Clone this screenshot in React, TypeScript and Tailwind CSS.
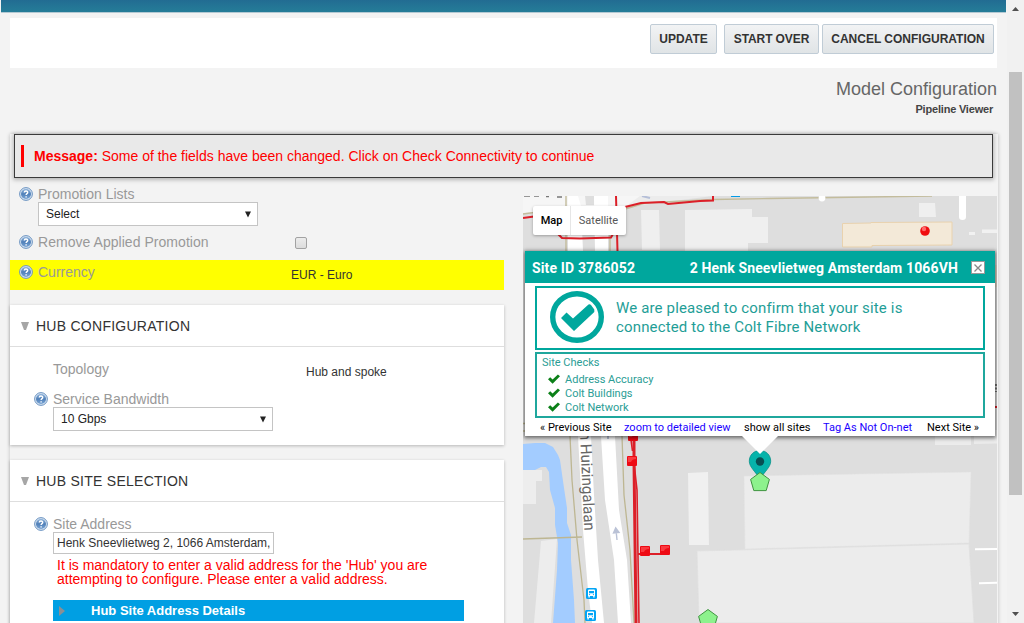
import type { ReactNode } from "react";

function HelpIcon() {
  return (
    <svg className="mb-px h-[14px] w-[14px] shrink-0" viewBox="0 0 14 14">
      <defs>
        <linearGradient id="help-fill" x1="0" y1="0" x2="0" y2="1">
          <stop offset="0" stopColor="#8fb4dc" />
          <stop offset="0.5" stopColor="#4f7fb8" />
          <stop offset="1" stopColor="#7ba6d6" />
        </linearGradient>
      </defs>
      <circle cx="7" cy="7" r="6.4" fill="#d5e2f0" stroke="#5f8abc" strokeWidth="0.9" />
      <circle cx="7" cy="7" r="5" fill="url(#help-fill)" />
      <path d="M5.3 5.6C5.3 3.6 8.7 3.5 8.7 5.4C8.7 6.6 7.1 6.6 7.1 8M7.1 9.2V10.5" fill="none" stroke="#fff" strokeWidth="1.4" />
    </svg>
  );
}

function Label({ children, help = true }: { children: ReactNode; help?: boolean }) {
  return (
    <div className="flex h-[15px] items-center gap-[5px] text-[14px] leading-[15px] text-[#999]">
      {help ? <HelpIcon /> : <span className="w-[14px]" />}
      <span className="whitespace-nowrap">{children}</span>
    </div>
  );
}

function Select({ value }: { value: string }) {
  return (
    <div className="flex h-[24px] w-[220px] items-center justify-between border border-[#c4c4c4] bg-white pl-[7px] pr-[5px] text-[12px] text-[#222]">
      <span>{value}</span>
      <svg className="h-[7px] w-[8px]" viewBox="0 0 8 7">
        <path d="M1 0.5H7L4 6.5Z" fill="#222" />
      </svg>
    </div>
  );
}

function Card({ title, className, children }: { title: string; className: string; children: ReactNode }) {
  return (
    <section className={`w-[494px] shrink-0 bg-white shadow-[0_1px_3px_rgba(0,0,0,0.25)] ${className}`}>
      <div className="flex h-[42px] items-center gap-[7px] border-b border-[#dedede] pt-px pl-[11px]">
        <svg className="h-[8px] w-[8px]" viewBox="0 0 8 8">
          <path d="M0 0H8L5 8H3Z" fill="#a6a6a6" />
        </svg>
        <span className="text-[14px] tracking-[0.26px] text-[#333]">{title}</span>
      </div>
      {children}
    </section>
  );
}

function ToolbarButton({ className, children }: { className: string; children: ReactNode }) {
  return (
    <button
      className={`flex h-[30px] items-center justify-center rounded-[2px] border border-[#c0ccd6] bg-linear-to-b from-[#f2f3f4] to-[#e0e4e6] pb-px text-[12px] font-bold whitespace-nowrap text-[#333] ${className}`}
    >
      {children}
    </button>
  );
}

function RedNode({ x, y }: { x: number; y: number }) {
  return (
    <g>
      <rect x={x - 5} y={y - 5} width="10" height="10" rx="1" fill="#ee0a14" />
      <path d={`M${x - 4} ${y - 4}h8v2q-4 0 -5 3h-3z`} fill="#fa3a40" />
    </g>
  );
}

function BusStop({ x, y }: { x: number; y: number }) {
  return (
    <g transform={`translate(${x} ${y})`}>
      <rect width="11" height="11" rx="1.5" fill="#03a5f5" />
      <path d="M2 2.5Q2 1.6 3 1.6H8Q9 1.6 9 2.5V8H8.6V9.4H7.2V8H3.8V9.4H2.4V8H2Z" fill="#fff" />
      <path d="M3 3H8V5.3H3Z" fill="#03a5f5" />
      <path d="M3 6.6H4.1M6.9 6.6H8" stroke="#03a5f5" strokeWidth="0.9" />
    </g>
  );
}

function Pentagon({ x, y }: { x: number; y: number }) {
  return (
    <path
      transform={`translate(${x} ${y})`}
      d="M0 -9.5L9.4 -2.6L6.2 8.6H-6.2L-9.4 -2.6Z"
      fill="#8df28d"
      stroke="#3f9440"
      strokeWidth="1"
    />
  );
}

function MapDrawing() {
  return (
    <svg className="block h-[427px] w-[474px]" viewBox="523 196 474 427">
      <rect x="523" y="196" width="475" height="427" fill="#dedede" />
      {/* upper streets */}
      <path d="M523 196H640L643 200L625 206L523 213Z" fill="#f6f6f6" />
      <path d="M568 196H578L581 206L583 251H568ZM594 196H608V251H595Z" fill="#fff" />
      <path d="M585 196H594V205H586Z" fill="#dedede" />
      <path d="M640 196H713L625 207Z" fill="#ececec" />
      <path d="M566 196V251M610 230V251M523 214L575 207M622 210L645 203L713 199.5L770 198.5L932 196" fill="none" stroke="#c3bc9c" strokeWidth="1.4" />
      <path d="M524 196H530M534 196H539M546 196.5H549M557 197H562" stroke="#777" strokeWidth="1.6" />
      <path d="M642 196L650 198" stroke="#b5bfd8" strokeWidth="2" />
      <rect x="731" y="195" width="9" height="2" fill="#039be5" />
      <circle cx="822" cy="198" r="3.4" fill="#fff" />
      {/* upper buildings */}
      <path d="M641 210H659L660 250H642ZM685 210L752 209V217H768V243H748V251H685ZM919 203H935L936 217H919Z" fill="#efefef" />
      <path d="M959 193H966V217Q966 220 962.5 220Q959 220 959 217Z" fill="#fff" />
      <path d="M969 232H975V235H969ZM982 229.5H998V233H982Z" fill="#f1f1f1" />
      <path d="M842.5 223.5L871 223V222.5L952 222V245L872 245.5V247H842.5Z" fill="#f3e9d8" stroke="#e9d2ae" />
      <g fill="none" stroke="#dc1f28" strokeWidth="2">
        <path d="M523 218L534 216.5M558 234L562 238L580 238.5L611 237.5L613 234M616 196L617.5 251M625 207L641 203L664 202L668 204L700 201L713 200.5V196" />
      </g>
      <circle cx="925" cy="231" r="4.8" fill="#f00d10" />
      <circle cx="924" cy="229" r="2.2" fill="#ff6b6b" />
      {/* canal and left blocks */}
      <path d="M523 444L535 443H545L553 447L558 455L560 460L564 488L567 508V523L571 535V560L574 600L575 623H553L557 570L558 543L555 525V508L550 490L549 472L546 467H541L535 470H523Z" fill="#a3ccff" />
      <path d="M523 470H542V481H536V504H523ZM541 541L557 539L551 623H534Z" fill="#ededed" />
      {/* main road */}
      <path d="M578 436L583 530L588 590L592 623H604L598 560L594 495L591 436ZM601 436L605 500L614 560L618 623H631L627 560L619 510L615 436Z" fill="#fff" />
      <path d="M523 539L582 537M570 436L572 480L577 540L584 600L585 623M622 436L624 495L630 550L634 623M523 423.5H527M523 431H527" fill="none" stroke="#bdb692" strokeWidth="1.3" />
      <path d="M617 540L616 530M613.5 533L615.7 528L619 532.5Z" fill="#bac2d6" stroke="#bac2d6" strokeWidth="1.4" />
      <path d="M608 436V439" stroke="#bac2d6" strokeWidth="2" />
      <text transform="translate(580 432) rotate(87.5)" textLength="99" lengthAdjust="spacingAndGlyphs" className="fill-[#666] font-['Roboto',sans-serif] text-[15.5px]">
        n Huizingalaan
      </text>
      {/* right-hand buildings */}
      <g fill="#ececec">
        <path d="M688 473L708 472L709 545H689Z" fill="#f0f0f0" />
        <path d="M744 476L971 472L969 543L745 549Z" stroke="#e3e3e3" strokeWidth="0.5" />
        <path d="M697 551L969 544L974 623H699Z" stroke="#dfdfdf" strokeWidth="0.7" />
        <path d="M935 430H971V445H935ZM974 430H998V443.5L974 444Z" />
      </g>
      <path d="M975 549.3L998 549M979 583.2L998 582.8" stroke="#fff" strokeWidth="2" />
      <path d="M996 384V392" stroke="#777" strokeWidth="2" strokeDasharray="2 1.5" />
      <rect x="994" y="265" width="4" height="22" fill="#e0d7c9" />
      <rect x="995" y="406" width="3" height="2" fill="#dc1f28" />
      {/* fibre routes */}
      <g fill="none" stroke="#dc1f28">
        <path d="M634 436V461L636 620V623" strokeWidth="3" />
        <path d="M631 440L632.5 451M634 463L637 490L639 623" strokeWidth="1.6" />
        <path d="M638 554H664" strokeWidth="2" />
      </g>
      <RedNode x={633} y={436} />
      <RedNode x={632} y={461} />
      <RedNode x={645} y={551} />
      <RedNode x={665} y={550} />
      <BusStop x={586} y={588} />
      <BusStop x={585} y={610} />
      <path d="M760 450.5C754 450.5 749.3 455 749.3 461.2C749.3 467 755 471 760 479C765 471 770.7 467 770.7 461.2C770.7 455 766 450.5 760 450.5Z" fill="#06b3aa" stroke="#079289" strokeWidth="0.8" />
      <circle cx="760" cy="461.5" r="4.2" fill="#084f52" />
      <Pentagon x={760} y={482} />
      <Pentagon x={708} y={619} />
    </svg>
  );
}

function Tick() {
  return (
    <svg className="mb-[2px] h-[10px] w-[12px]" viewBox="0 0 12 10">
      <path d="M0 5.2L2.2 3.2L4.6 5.4L9.9 0.4L12 2.3L4.6 9.7Z" fill="#0b8018" />
    </svg>
  );
}

function SitePopup() {
  return (
    <div className="absolute top-[55px] left-[2px] flex h-[185px] w-[470px] flex-col bg-white font-['Roboto',sans-serif] shadow-[0_1px_4px_1px_rgba(0,0,0,0.55)]">
      <div className="flex h-[32px] shrink-0 items-center bg-[#00a79d] pt-px pr-[10px] pl-[7px] text-[14px] font-bold tracking-[0.14px] whitespace-nowrap text-white">
        <span className="pt-[2px]">Site ID 3786052</span>
        <span className="ml-auto pt-[2px]">2 Henk Sneevlietweg Amsterdam 1066VH</span>
        <span className="ml-[13px] flex h-[13px] w-[14px] items-center justify-center border border-[#999] bg-white">
          <svg className="h-[8px] w-[8px]" viewBox="0 0 8 8">
            <path d="M0.5 0.5L7.5 7.5M7.5 0.5L0.5 7.5" stroke="#888" strokeWidth="1.3" />
          </svg>
        </span>
      </div>
      <div className="mt-[3px] ml-[10px] flex h-[64px] w-[450px] shrink-0 items-center border-2 border-[#00a79d] pb-[2px] pl-[13px]">
        <svg className="h-[52px] w-[54px]" viewBox="0 0 54 52">
          <ellipse cx="27" cy="26" rx="24.3" ry="23.3" fill="none" stroke="#00a79d" strokeWidth="5.4" />
          <path d="M11 27L16.5 21.5L23 27.5L38.5 13.5Q40 13 41 14L44.3 18.5V21L24 40Z" fill="#00a79d" />
        </svg>
        <p className="ml-[12px] pt-[2px] text-[15px] leading-[19px] tracking-[0.15px] whitespace-nowrap text-[#1f9e97]">
          We are pleased to confirm that your site is
          <br />
          connected to the Colt Fibre Network
        </p>
      </div>
      <div className="mt-[2px] ml-[10px] h-[66px] w-[450px] shrink-0 border-2 border-[#1fa79d] pl-[5px] text-[11px] text-[#2a9d95]">
        <div className="mt-[1px] h-[18px] leading-[15px]">Site Checks</div>
        {["Address Accuracy", "Colt Buildings", "Colt Network"].map((item) => (
          <div key={item} className="flex h-[14px] items-center gap-[5px] pl-[6px] leading-[14px]">
            <Tick />
            <span>{item}</span>
          </div>
        ))}
      </div>
      <div className="flex h-[18px] items-center pt-[2px] pl-[15px] text-[11px] whitespace-nowrap text-black">
        <span className="w-[84px]">« Previous Site</span>
        <span className="w-[120px] text-[#1a00ff]">zoom to detailed view</span>
        <span className="w-[79px]">show all sites</span>
        <span className="w-[104px] text-[#1a00ff]">Tag As Not On-net</span>
        <span>Next Site »</span>
      </div>
      <svg className="absolute top-[185px] left-[217px] h-[18px] w-[36px]" viewBox="0 0 36 18">
        <path d="M0 0H36L18 18Z" fill="#fff" />
      </svg>
    </div>
  );
}

function MapPanel() {
  return (
    <div className="relative mt-[17px] ml-[19px] h-[427px] w-[474px] shrink-0 overflow-hidden">
      <MapDrawing />
      <div className="absolute top-[10px] left-[10px] flex h-[29px] w-[93px] items-center rounded-[2px] bg-white font-['Roboto',sans-serif] text-[11px] shadow-[0_1px_3px_rgba(0,0,0,0.3)]">
        <span className="flex h-full w-[38px] items-center justify-center border-r border-[#e6e6e6] pt-px font-medium text-black">Map</span>
        <span className="flex-1 pt-px text-center text-[#565656]">Satellite</span>
      </div>
      <SitePopup />
    </div>
  );
}

function Scrollbar() {
  return (
    <div className="flex w-[17px] flex-col items-center bg-[#f1f1f1]">
      <svg className="mt-[7px] h-[4px] w-[7px]" viewBox="0 0 7 4">
        <path d="M0 4L3.5 0L7 4Z" fill="#505050" />
      </svg>
      <div className="mt-[61px] h-[423px] w-[13px] bg-[#c1c1c1]" />
      <svg className="mt-auto mb-[7px] h-[4px] w-[7px]" viewBox="0 0 7 4">
        <path d="M0 0H7L3.5 4Z" fill="#505050" />
      </svg>
    </div>
  );
}

export default function App() {
  return (
    <div className="flex h-[623px] w-[1024px] overflow-hidden bg-[#f3f3f3] font-['Liberation_Sans',Arial,sans-serif]">
      <div className="flex w-[1007px] shrink-0 flex-col">
        <header className="ml-px h-[13px] w-[1005px] shrink-0 border-b border-[#b4c9d3] bg-linear-to-b from-[#226c92] to-[#257d98]" />
        <div className="mt-[5px] ml-[10px] flex h-[50px] w-[987px] shrink-0 justify-end bg-white pt-[6px] pr-[3px]">
          <ToolbarButton className="w-[67px]">UPDATE</ToolbarButton>
          <ToolbarButton className="ml-[7px] w-[95px] tracking-[-0.1px]">START OVER</ToolbarButton>
          <ToolbarButton className="ml-[3px] w-[172px]">CANCEL CONFIGURATION</ToolbarButton>
        </div>
        <div className="mt-[10px] h-[56px] w-[997px] shrink-0 text-right">
          <h1 className="text-[18px] leading-[22px] text-[#666]">Model Configuration</h1>
          <div className="mt-[2px] pr-[4px] text-[11px] leading-[14px] font-bold tracking-[-0.2px] text-[#444]">Pipeline Viewer</div>
        </div>
        <main className="ml-[10px] flex h-[520px] w-[988px] shrink-0 flex-col shadow-[0_0_4px_rgba(0,0,0,0.22)]">
          <div className="mb-px ml-[4px] flex h-[44px] w-[979px] shrink-0 items-center border border-[#3a3a3a] bg-[#e9e9e9] pl-[6px] text-[14px] text-[#f00] shadow-[0_1px_4px_1px_rgba(0,0,0,0.25)]">
            <div className="flex h-[22px] items-center border-l-[3px] border-[#f00] pl-[10px] whitespace-pre">
              <b>Message:</b> Some of the fields have been changed. Click on Check Connectivity to continue
            </div>
          </div>
          <div className="flex">
            <div className="flex w-[494px] shrink-0 flex-col">
              <div className="h-[23px] pt-[8px] pl-[9px]">
                <Label>Promotion Lists</Label>
              </div>
              <div className="pl-[28px]">
                <Select value="Select" />
              </div>
              <div className="flex h-[34px] items-center pl-[9px]">
                <div className="w-[276px] pb-px tracking-[0.04px]">
                  <Label>Remove Applied Promotion</Label>
                </div>
                <div className="h-[12px] w-[12px] rounded-[2px] border border-[#a2a2a2] bg-linear-to-b from-[#ececec] to-[#dcdcdc]" />
              </div>
              <div className="flex h-[30px] bg-[#ff0] pt-[5px] pl-[9px]">
                <div className="w-[272px]">
                  <Label>Currency</Label>
                </div>
                <span className="pt-[3px] text-[12px] leading-[15px] text-[#333]">EUR - Euro</span>
              </div>
              <Card title="HUB CONFIGURATION" className="mt-[15px] h-[140px]">
                <div className="flex h-[44px] pt-[15px] pl-[24px]">
                  <div className="w-[272px]">
                    <Label help={false}>Topology</Label>
                  </div>
                  <span className="pt-[3px] text-[12px] leading-[15px] text-[#333]">Hub and spoke</span>
                </div>
                <div className="pt-px pl-[24px]">
                  <Label>Service Bandwidth</Label>
                  <div className="pl-[19px]">
                    <Select value="10 Gbps" />
                  </div>
                </div>
              </Card>
              <Card title="HUB SITE SELECTION" className="mt-[15px] h-[190px]">
                <div className="pt-[15px] pl-[24px]">
                  <Label>Site Address</Label>
                  <div className="pl-[19px]">
                    <div className="flex h-[22px] w-[221px] items-center border border-[#c4c4c4] bg-white pl-[3px] text-[12px] whitespace-nowrap text-[#333]">
                      Henk Sneevlietweg 2, 1066 Amsterdam,
                    </div>
                    <p className="mt-[4px] pl-[4px] text-[14px] leading-[14px] whitespace-nowrap text-[#f00]">
                      It is mandatory to enter a valid address for the 'Hub' you are
                      <br />
                      attempting to configure. Please enter a valid address.
                    </p>
                    <div className="mt-[14px] flex h-[21px] w-[411px] items-center bg-[#009fe3] pl-[6px] text-[13px] font-bold text-white">
                      <svg className="h-[10px] w-[6px]" viewBox="0 0 6 10">
                        <path d="M0 0L6 5L0 10Z" fill="#8a8f94" />
                      </svg>
                      <span className="ml-[26px]">Hub Site Address Details</span>
                    </div>
                  </div>
                </div>
              </Card>
            </div>
            <MapPanel />
          </div>
        </main>
      </div>
      <Scrollbar />
    </div>
  );
}
